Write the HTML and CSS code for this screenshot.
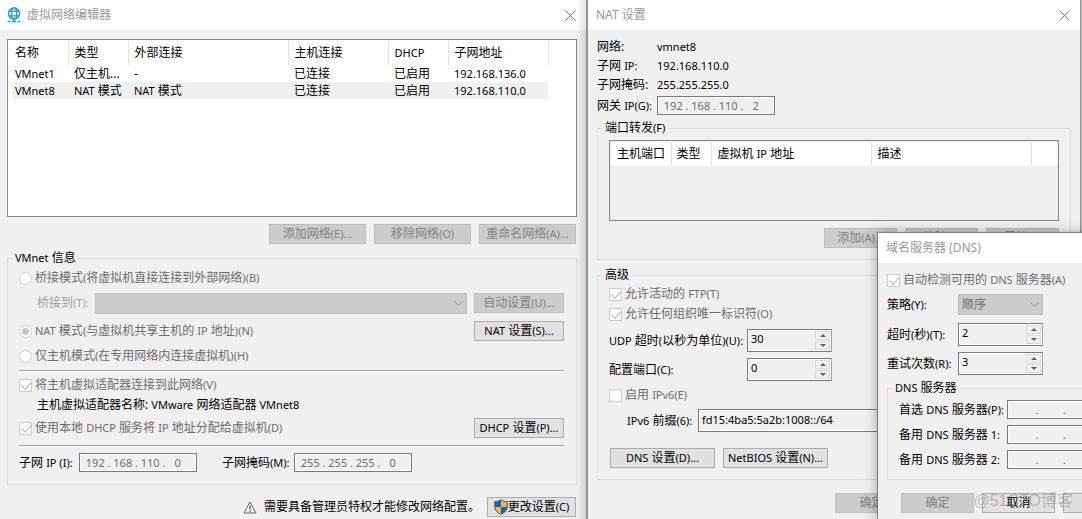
FILE: index.html
```html
<!DOCTYPE html>
<html lang="zh-CN">
<head>
<meta charset="utf-8">
<title>虚拟网络编辑器</title>
<link rel="stylesheet" href="styles.css">
</head>
<body>
<main class="desktop">
  <section class="window editor">
    <header class="titlebar">
      <svg class="app-icon" width="14" height="16" viewBox="0 0 14 16" fill="none" stroke="#1c94d2" stroke-width="1.3"><circle cx="7" cy="6.5" r="5.6"/><ellipse cx="7" cy="6.5" rx="2.6" ry="5.6"/><path d="M2 4.2h10M2 8.8h10"/><path stroke="#17b39a" d="M0.5 14.5h3M5 14.5h4M10.5 14.5h3M7 12v2"/></svg>
      <h1>虚拟网络编辑器</h1>
      <button class="close" aria-label="关闭"><svg width="11" height="11" viewBox="0 0 11 11"><path d="M.5 .5l10 10M10.5 .5l-10 10"/></svg></button>
    </header>
    <div class="content">
      <div class="list networks">
        <table>
          <thead><tr><th>名称</th><th>类型</th><th>外部连接</th><th>主机连接</th><th><span class="en">DHCP</span></th><th>子网地址</th></tr></thead>
          <tbody>
            <tr><td class="en">VMnet1</td><td>仅主机...</td><td>-</td><td>已连接</td><td>已启用</td><td class="en">192.168.136.0</td></tr>
            <tr class="selected"><td class="en">VMnet8</td><td><span class="en">NAT</span> 模式</td><td><span class="en">NAT</span> 模式</td><td>已连接</td><td>已启用</td><td class="en">192.168.110.0</td></tr>
          </tbody>
        </table>
      </div>
      <div class="actions network-actions">
        <button disabled>添加网络<span class="en">(E)...</span></button>
        <button disabled>移除网络<span class="en">(O)</span></button>
        <button disabled>重命名网络<span class="en">(A)...</span></button>
      </div>
      <fieldset class="info">
        <legend><span class="en">VMnet</span> 信息</legend>
        <label class="option tall"><input type="radio" name="mode" disabled><span>桥接模式<span class="en">(</span>将虚拟机直接连接到外部网络<span class="en">)(B)</span></span></label>
        <div class="row bridge-row">
          <label class="faded" for="bridge">桥接到<span class="en">(T):</span></label>
          <span class="combo"><select id="bridge" disabled><option></option></select><svg width="9" height="5" viewBox="0 0 9 5"><path d="M.5 .5l4 4 4-4"/></svg></span>
          <button class="side" disabled>自动设置<span class="en">(U)...</span></button>
        </div>
        <div class="row nat-row">
          <label class="option"><input type="radio" name="mode" checked disabled><span><span class="en">NAT</span> 模式<span class="en">(</span>与虚拟机共享主机的 <span class="en">IP</span> 地址<span class="en">)(N)</span></span></label>
          <button class="side"><span class="en">NAT</span> 设置<span class="en">(S)...</span></button>
        </div>
        <label class="option tall host-row"><input type="radio" name="mode" disabled><span>仅主机模式<span class="en">(</span>在专用网络内连接虚拟机<span class="en">)(H)</span></span></label>
        <hr class="rule first">
        <label class="option tall"><input type="checkbox" checked disabled><span>将主机虚拟适配器连接到此网络<span class="en">(V)</span></span></label>
        <p class="adapter">主机虚拟适配器名称: <span class="en">VMware</span> 网络适配器 <span class="en">VMnet8</span></p>
        <div class="row dhcp-row">
          <label class="option"><input type="checkbox" checked disabled><span>使用本地 <span class="en">DHCP</span> 服务将 <span class="en">IP</span> 地址分配给虚拟机<span class="en">(D)</span></span></label>
          <button class="side"><span class="en">DHCP</span> 设置<span class="en">(P)...</span></button>
        </div>
        <hr class="rule">
        <div class="row address-row">
          <label for="subnet">子网 <span class="en">IP (I):</span></label>
          <span class="ip"><input id="subnet" value="192" disabled>.<input aria-label="子网 IP 2" value="168" disabled>.<input aria-label="子网 IP 3" value="110" disabled>.<input aria-label="子网 IP 4" value="0" disabled></span>
          <label class="mask" for="mask">子网掩码<span class="en">(M):</span></label>
          <span class="ip"><input id="mask" value="255" disabled>.<input aria-label="掩码 2" value="255" disabled>.<input aria-label="掩码 3" value="255" disabled>.<input aria-label="掩码 4" value="0" disabled></span>
        </div>
      </fieldset>
      <footer class="actions notice">
        <svg width="14" height="13" viewBox="0 0 14 13" fill="none" stroke="#5c6670"><path d="M7 1L1 12h12z"/><path stroke-width="1.5" d="M7 4.5v4M7 9.5v1.2"/></svg>
        <span>需要具备管理员特权才能修改网络配置。</span>
        <button class="change"><svg width="14" height="16" viewBox="0 0 14 16"><path fill="#1464c0" d="M7 .5C5 2 3 2.5 .7 2.5V8c0 3.500 3 6 6.300 7.500C10.300 14 13.300 11.500 13.300 8V2.500C11 2.500 9 2 7 .5z"/><path fill="#fbbc2c" d="M7 1c2 1.500 4 2 5.800 2v5H7zM7 8v7C4 13.500 1.200 11.300 1.200 8z"/><path fill="none" stroke="#596673" d="M7 .7C5 2.200 3 2.700 .7 2.700V8c0 3.500 3 6 6.300 7.300C10.300 14 13.300 11.500 13.300 8V2.700C11 2.700 9 2.200 7 .7z"/></svg>更改设置<span class="en">(C)</span></button>
      </footer>
    </div>
  </section>

  <section class="window nat">
    <header class="titlebar">
      <h2>NAT 设置</h2>
      <button class="close" aria-label="关闭"><svg width="11" height="11" viewBox="0 0 11 11"><path d="M.5 .5l10 10M10.5 .5l-10 10"/></svg></button>
    </header>
    <div class="content">
      <dl class="facts">
        <dt>网络:</dt><dd class="en">vmnet8</dd>
        <dt>子网 <span class="en">IP:</span></dt><dd class="en">192.168.110.0</dd>
        <dt>子网掩码:</dt><dd class="en">255.255.255.0</dd>
      </dl>
      <div class="row gateway">
        <label for="gateway">网关 <span class="en">IP(G):</span></label>
        <span class="ip"><input id="gateway" value="192" disabled>.<input aria-label="网关 2" value="168" disabled>.<input aria-label="网关 3" value="110" disabled>.<input aria-label="网关 4" value="2" disabled></span>
      </div>
      <fieldset class="forwarding">
        <legend>端口转发<span class="en">(F)</span></legend>
        <div class="list ports">
          <table><thead><tr><th>主机端口</th><th>类型</th><th>虚拟机 <span class="en">IP</span> 地址</th><th>描述</th><th></th></tr></thead></table>
        </div>
        <div class="actions">
          <button class="small" disabled>添加<span class="en">(A)...</span></button>
          <button class="small" disabled>移除<span class="en">(R)</span></button>
          <button class="small" disabled>属性<span class="en">(P)</span></button>
        </div>
      </fieldset>
      <fieldset class="advanced">
        <legend>高级</legend>
        <label class="option"><input type="checkbox" checked disabled><span>允许活动的 <span class="en">FTP(T)</span></span></label>
        <label class="option"><input type="checkbox" checked disabled><span>允许任何组织唯一标识符<span class="en">(O)</span></span></label>
        <div class="row spin-row">
          <label for="udp"><span class="en">UDP</span> 超时<span class="en">(</span>以秒为单位<span class="en">)(U):</span></label>
          <span class="spin"><input id="udp" value="30"><span class="arrows"><button aria-label="增加"></button><button aria-label="减少"></button></span></span>
        </div>
        <div class="row spin-row next">
          <label for="port">配置端口<span class="en">(C):</span></label>
          <span class="spin"><input id="port" value="0"><span class="arrows"><button aria-label="增加"></button><button aria-label="减少"></button></span></span>
        </div>
        <label class="option ipv6-option"><input type="checkbox" disabled><span>启用 <span class="en">IPv6(E)</span></span></label>
        <div class="row prefix">
          <label for="prefix"><span class="en">IPv6</span> 前缀<span class="en">(6):</span></label>
          <input class="text" id="prefix" value="fd15:4ba5:5a2b:1008::/64">
        </div>
        <div class="row wide-buttons">
          <button><span class="en">DNS</span> 设置<span class="en">(D)...</span></button>
          <button><span class="en">NetBIOS</span> 设置<span class="en">(N)...</span></button>
        </div>
      </fieldset>
      <footer class="actions nat-footer">
        <button class="small" disabled>确定</button>
        <button class="small">取消</button>
        <button class="small">帮助</button>
      </footer>
    </div>
  </section>

  <section class="window dns">
    <header class="titlebar"><h2>域名服务器 (DNS)</h2></header>
    <div class="content">
      <label class="option"><input type="checkbox" checked disabled><span>自动检测可用的 <span class="en">DNS</span> 服务器<span class="en">(A)</span></span></label>
      <div class="row policy">
        <label for="policy">策略<span class="en">(Y):</span></label>
        <span class="combo"><select id="policy" disabled><option>顺序</option></select><svg width="9" height="5" viewBox="0 0 9 5"><path d="M.5 .5l4 4 4-4"/></svg></span>
      </div>
      <div class="row timeout">
        <label for="timeout">超时<span class="en">(</span>秒<span class="en">)(T):</span></label>
        <span class="spin"><input id="timeout" value="2"><span class="arrows"><button aria-label="增加"></button><button aria-label="减少"></button></span></span>
      </div>
      <div class="row retry">
        <label for="retry">重试次数<span class="en">(R):</span></label>
        <span class="spin"><input id="retry" value="3"><span class="arrows"><button aria-label="增加"></button><button aria-label="减少"></button></span></span>
      </div>
      <fieldset class="servers">
        <legend><span class="en">DNS</span> 服务器</legend>
        <div class="row"><label for="dns1">首选 <span class="en">DNS</span> 服务器<span class="en">(P):</span></label><span class="ip"><input id="dns1" disabled>.<input aria-label="首选 2" disabled>.<input aria-label="首选 3" disabled>.<input aria-label="首选 4" disabled></span></div>
        <div class="row"><label for="dns2">备用 <span class="en">DNS</span> 服务器 <span class="en">1:</span></label><span class="ip"><input id="dns2" disabled>.<input aria-label="备用一 2" disabled>.<input aria-label="备用一 3" disabled>.<input aria-label="备用一 4" disabled></span></div>
        <div class="row"><label for="dns3">备用 <span class="en">DNS</span> 服务器 <span class="en">2:</span></label><span class="ip"><input id="dns3" disabled>.<input aria-label="备用二 2" disabled>.<input aria-label="备用二 3" disabled>.<input aria-label="备用二 4" disabled></span></div>
      </fieldset>
      <footer class="actions dns-footer">
        <button class="small" disabled>确定</button>
        <button class="small">取消</button>
        <button class="small">帮助</button>
      </footer>
    </div>
  </section>
  <div class="watermark">@51CTO博客</div>
</main>
</body>
</html>
```

FILE: styles.css
```css
* { box-sizing: border-box; }

body {
  margin: 0;
  overflow: hidden;
  background: #f0f0f0;
  color: #000;
  font: 12px/16px "Noto Sans", "Noto Sans CJK SC", sans-serif;
}

input, select, button { font: inherit; color: inherit; margin: 0; }
.en { font-size: 11px; }

.desktop {
  position: relative;
  display: grid;
  grid-template-columns: minmax(0, 586fr) minmax(0, 492fr);
  column-gap: 2px;
  min-height: 100vh;
  padding-right: 2px;
  overflow: hidden;
  background: linear-gradient(#c4c4c4, #c4c4c4) right / 1px 100% no-repeat #929292;
}

/* Windows */
.window { background: #f0f0f0; white-space: nowrap; }
.editor { background: linear-gradient(to left, #d4d4d4, #f0f0f0 9px); }
.titlebar { display: flex; align-items: center; height: 30px; padding: 0 10px 0 8px; background: #fff; color: #999; }
.editor .titlebar { padding-left: 7px; background: linear-gradient(to left, #e2e2e2, #fff 9px); }
.titlebar h1, .titlebar h2 { margin: 0; font-size: 12px; font-weight: 400; }
.app-icon { margin-right: 6px; }
.close { display: flex; margin-left: auto; padding: 0; border: 0; background: none; }
.close svg { fill: none; stroke: #808080; }
.content { padding: 0 9px; }
.editor .content { padding: 9px 9px 0 7px; }

/* Lists */
.list { border: 1px solid #828790; }
table { border-collapse: collapse; table-layout: fixed; }
th, td { padding: 0 0 0 6px; font-weight: 400; text-align: left; overflow: hidden; }
th { height: 24px; background: #fff; border-right: 1px solid #e2e2e2; }
.networks { height: 178px; padding: 1px 0 0 5px; background: #fff; }
.networks table { width: 535px; }
.networks td { height: 17px; }
.networks th:first-child, .networks td:first-child { width: 55px; padding-left: 2px; }
.networks th:nth-child(2), .networks th:nth-child(5) { width: 60px; }
.networks th:nth-child(3) { width: 160px; }
.networks th:nth-child(4), .networks th:nth-child(6) { width: 100px; }
.selected { background: #f0f0f0; }

/* Buttons */
.actions { display: flex; justify-content: flex-end; gap: 8px; }
.actions button, .row > button {
  height: 20px;
  padding: 0;
  border: 1px solid #adadad;
  border-radius: 0;
  background: #e1e1e1;
  line-height: 16px;
}
.actions button:disabled, .row > button:disabled { border-color: #bfbfbf; background: #ccc; color: #838383; }
.network-actions { margin: 7px 1px 0 0; }
.network-actions button { width: 97px; }
.actions .small { flex: none; width: 73px; }
.row > .side { flex: none; width: 90px; margin-left: auto; }

/* Groups and form rows */
fieldset { min-width: 0; margin: 0; padding: 0 12px 12px 11px; border: 1px solid #dcdcdc; }
legend { height: 16px; margin-left: -6px; padding: 0 3px 0 2px; }
.info { margin-top: 6px; }
.row, .option { display: flex; align-items: center; }
.option { gap: 3px; height: 20px; color: #6d6d6d; }
.tall { height: 24px; }
.option input {
  appearance: none;
  position: relative;
  flex: none;
  width: 13px;
  height: 13px;
  border: 1px solid #ccc;
  background: #fff;
}
.option input[type="radio"] { border-radius: 50%; }
.option input[type="radio"]:checked { background: radial-gradient(circle, #c4c4c4 3px, #fff 4px); }
.option input[type="checkbox"]:checked::after {
  content: "";
  position: absolute;
  left: 3px;
  top: 0;
  width: 5px;
  height: 8px;
  border: solid #b4b4b4;
  border-width: 0 1px 1px 0;
  transform: rotate(42deg);
}
.faded { color: #a0a0a0; }
.bridge-row { margin-top: 3px; padding-left: 18px; align-items: flex-start; }
.bridge-row label { width: 58px; line-height: 20px; }
.bridge-row .combo { flex: 1; margin-right: 7px; }
.nat-row { margin-top: 7px; }
.host-row { margin-top: 3px; }
.rule { height: 2px; margin: 7px 0 0; border: 0; border-top: 1px solid #a0a0a0; background: #fff; }
.rule.first { margin: 2px 0 1px; }
.adapter { margin: 0 0 0 18px; }
.dhcp-row { margin-top: 5px; }
.address-row { margin-top: 6px; }
.address-row label { width: 60px; }
.address-row .mask { width: 72px; margin-left: 25px; }
.notice { align-items: center; margin: 12px 1px 0 0; gap: 7px; }
.notice .change { display: flex; align-items: center; justify-content: center; width: 89px; }

/* Fields */
.ip {
  display: flex;
  flex: none;
  width: 118px;
  height: 19px;
  padding: 0 6px 0 3px;
  border: 1px solid #7a7a7a;
  box-shadow: inset 0 0 0 1px #fff;
  color: #6d6d6d;
  font-size: 11px;
  line-height: 17px;
}
.ip input { flex: 1; width: 0; height: 17px; padding: 0; border: 0; background: none; text-align: center; }
.combo { position: relative; display: flex; height: 21px; }
.combo select {
  appearance: none;
  width: 100%;
  padding: 0 3px;
  border: 1px solid #bfbfbf;
  border-radius: 0;
  background: #ccc;
  color: #6d6d6d;
  opacity: 1;
}
.combo svg { position: absolute; right: 4px; top: 8px; fill: none; stroke: #999; }
.spin {
  display: flex;
  flex: none;
  width: 85px;
  height: 23px;
  border: 1px solid #7a7a7a;
  border-right-color: #a0a0a0;
  box-shadow: inset 0 0 0 1px #fff;
}
.spin input { flex: 1; width: 0; padding: 0 3px 3px; border: 0; background: none; font-size: 11px; }
.arrows { display: grid; gap: 1px; width: 16px; padding: 1px 1px 1px 0; }
.arrows button { display: flex; align-items: center; justify-content: center; padding: 0; border: 1px solid #dadada; background: #f0f0f0; }
.arrows button::before { content: ""; border: solid transparent; border-width: 0 3px 3px; border-bottom-color: #606060; }
.arrows button:last-child::before { border-width: 3px 3px 0; border-top-color: #606060; }
.text { flex: 1; min-width: 0; height: 23px; padding: 0 3px 3px; border: 1px solid #7a7a7a; background: #f0f0f0; box-shadow: inset 0 0 0 1px #fff; }
.row .text { font-size: 11px; }

/* NAT settings */
.nat .content { padding-top: 7px; }
.facts { display: grid; grid-template-columns: 60px 1fr; grid-auto-rows: 19px; align-items: center; margin: 0; }
.facts dd { margin: 0; }
.gateway { margin-top: 2px; }
.gateway label { width: 60px; }
.forwarding { margin-top: 5px; padding: 0 11px 11px; }
.ports { height: 81px; margin-top: 4px; padding: 1px; }
.ports table { width: 100%; }
.ports th:first-child { width: 60px; }
.ports th:nth-child(2) { width: 40px; padding-left: 5px; }
.ports th:nth-child(3), .ports th:nth-child(4) { width: 160px; }
.ports th:last-child { border: 0; }
.forwarding .actions { margin-top: 7px; }
.advanced { margin-top: 7px; padding: 1px 0 11px 11px; }
.spin-row { margin-top: 5px; }
.spin-row.next { margin-top: 6px; }
.spin-row label { width: 138px; }
.ipv6-option { margin-top: 4px; }
.prefix { margin: 4px 12px 0 0; padding-left: 18px; }
.prefix label { width: 71px; }
.wide-buttons { gap: 8px; margin-top: 16px; padding-left: 1px; }
.wide-buttons button { width: 105px; }
.nat-footer { margin: 13px 1px 0 0; }

/* DNS dialog floats over the NAT window */
.dns { position: absolute; left: 878px; top: 233px; bottom: 0; width: 276px; box-shadow: 0 1px 12px rgba(0, 0, 0, .4), 0 0 0 1px #999; }
.dns .content { padding-top: 7px; }
.dns .row label { flex: none; width: 71px; }
.dns .combo { width: 85px; }
.policy { margin-top: 4px; }
.timeout { margin-top: 8px; }
.retry { margin-top: 6px; }
.servers { margin-top: 5px; padding: 4px 11px 10px; }
.servers .row + .row { margin-top: 6px; }
.dns .servers .row label { width: 108px; }
.dns-footer { justify-content: flex-start; margin-top: 13px; padding-left: 14px; }
.watermark { position: absolute; right: 9px; bottom: 6px; color: rgba(110, 110, 110, .42); font: 16px/24px "Liberation Sans", "Noto Sans CJK SC", sans-serif; }
```
